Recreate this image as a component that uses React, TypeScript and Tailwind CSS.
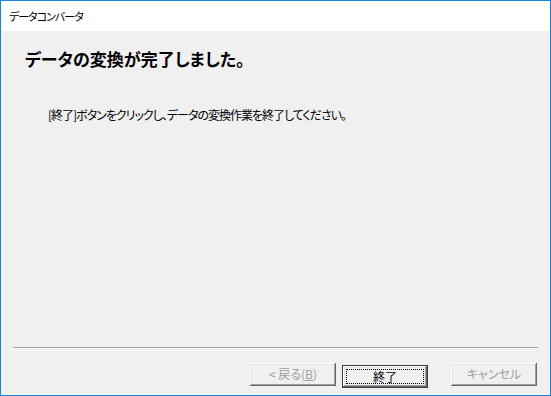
import React from "react";

const jp = "[font-family:'Noto_Sans_CJK_JP','Liberation_Sans',sans-serif] [font-feature-settings:'palt']";

// classic win32 3D push button bevel
const bevel =
  "shadow-[inset_-1px_-1px_0_#696969,inset_1px_1px_0_#ffffff,inset_-2px_-2px_0_#a0a0a0,inset_2px_2px_0_#e3e3e3]";

function WizardButton({
  children,
  disabled,
  isDefault,
}: {
  children: React.ReactNode;
  disabled?: boolean;
  isDefault?: boolean;
}) {
  if (isDefault) {
    return (
      <button
        type="button"
        className="h-[23px] w-[86px] border border-[#3c3c3c] bg-[#f0f0f0] p-0"
      >
        <span className={`flex h-full w-full items-center justify-center p-[3px] ${bevel}`}>
          <span className="flex h-full w-full items-center justify-center border border-dotted border-black text-[12px] leading-none text-black">
            {children}
          </span>
        </span>
      </button>
    );
  }
  return (
    <button
      type="button"
      disabled={disabled}
      className={`flex h-[23px] w-[86px] items-center justify-center bg-[#f0f0f0] text-[12px] leading-none ${bevel} ${
        disabled ? "text-[#a0a0a0]" : "text-black"
      }`}
    >
      {children}
    </button>
  );
}

export default function App() {
  return (
    <div className={`flex h-[396px] w-[551px] flex-col border border-[#1883d7] bg-white ${jp}`}>
      {/* title bar */}
      <div className="flex h-[30px] shrink-0 items-center bg-white pl-[8px] text-[11px] tracking-[-1px] text-black">
        データコンバータ
      </div>

      <div className="flex flex-1 flex-col bg-[#f0f0f0]">
        <h1 className="pl-[24px] pt-[16px] text-[17px] font-bold leading-[24px] text-black">
          データの変換が完了しました。
        </h1>
        <p className="mt-[36px] pl-[47px] text-[12px] leading-[16px] tracking-[-1px] text-black">
          [終了]ボタンをクリックし、データの変換作業を終了してください。
        </p>

        <div className="flex-1" />

        {/* etched separator */}
        <div className="mx-[12px] border-t border-b border-t-[#a0a0a0] border-b-white" />

        <div className="flex justify-end pb-[7px] pr-[13px] pt-[14px]">
          <WizardButton disabled>
            &lt; 戻る(<span className="underline">B</span>)
          </WizardButton>
          <div className="ml-[6px]">
            <WizardButton isDefault>終了</WizardButton>
          </div>
          <div className="ml-[23px]">
            <WizardButton disabled>キャンセル</WizardButton>
          </div>
        </div>
      </div>
    </div>
  );
}
